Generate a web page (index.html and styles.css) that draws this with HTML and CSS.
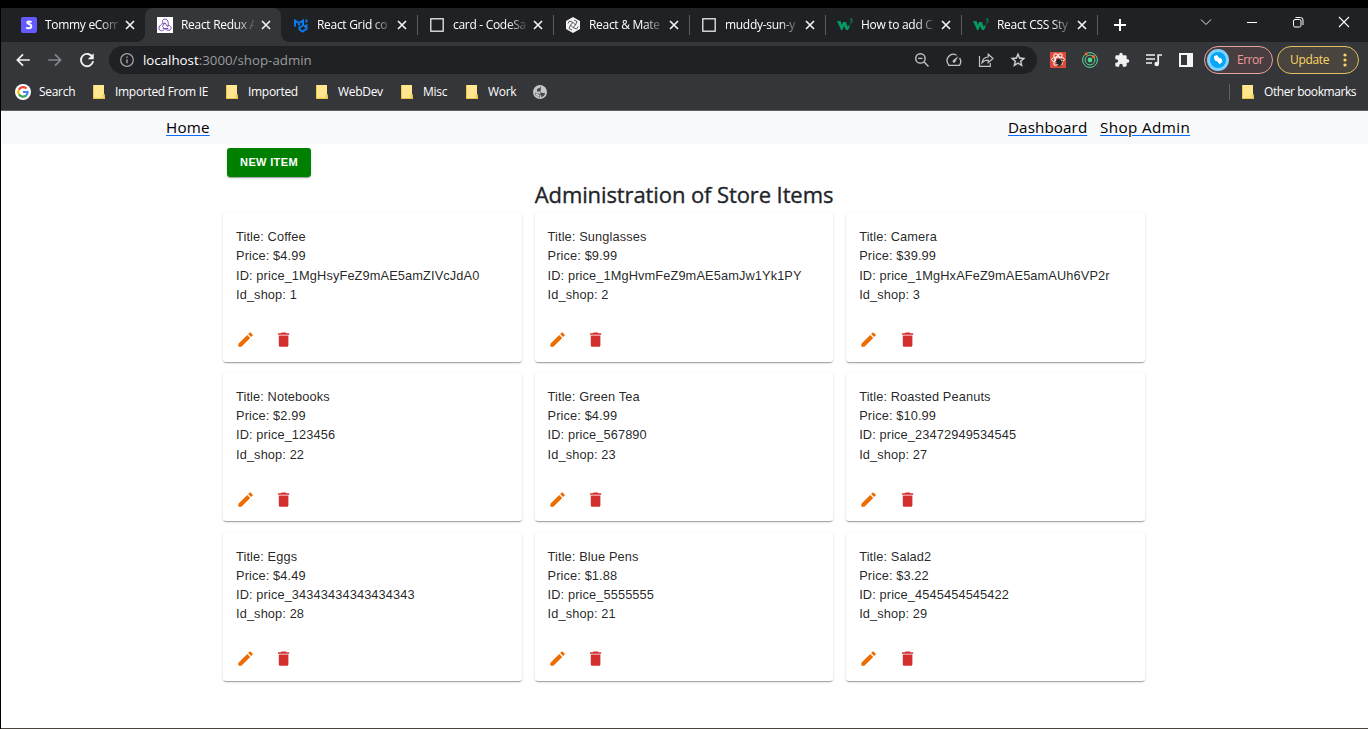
FILE: index.html
```html
<!DOCTYPE html>
<html lang="en">
<head>
<meta charset="utf-8">
<title>React Redux App</title>
<link rel="stylesheet" href="styles.css">
</head>
<body>
<svg class="defs" aria-hidden="true">
  <symbol id="close" viewBox="0 0 16 16"><path d="M4 4l8 8M12 4l-8 8" stroke="#f1f1f1" stroke-width="1.7" fill="none"/></symbol>
  <symbol id="mui" viewBox="0 0 16 16"><path d="M2 9.500V3.500L6 6l4-2.500V8.500L6.500 10.500v2l3 2 4-2.500V8.500l-2.500 1M6 5.500v3M13.500 2.500v3" stroke="#0a7cf0" stroke-width="2" fill="none"/></symbol>
  <symbol id="box" viewBox="0 0 16 16"><rect x="1.800" y="1.800" width="12.400" height="12.400" stroke="#eee" stroke-width="1.300" fill="none"/></symbol>
  <symbol id="w3" viewBox="0 0 16 16"><path d="M0 4h3.500l1.500 4 1-3h3l1.800 5L12.600 7v3.500L10.800 13H9L7 9l-1.600 4H4z" fill="#059862"/><path d="M13 2h2.300L14 3.500q1.600.2 1.200 1.500-.6 1.200-2.200.7" stroke="#059862" stroke-width=".9" fill="none"/></symbol>
  <symbol id="folder" viewBox="0 0 12 14"><path d="M0 0h11v9l1 1v4H0z" fill="#ffe68f"/><path d="M0 13.500h11.500V10H10v3M.4 0v13" stroke="#e8bd3b" stroke-width=".9" fill="none"/></symbol>
  <symbol id="edit" viewBox="0 0 24 24"><path d="M3 17.250V21h3.750L17.810 9.940l-3.750-3.750L3 17.250zM20.710 7.040c.39-.39.39-1.020 0-1.410l-2.340-2.340a.996.996 0 0 0-1.410 0l-1.830 1.830 3.750 3.750 1.830-1.830z" fill="#ed6c02"/></symbol>
  <symbol id="delete" viewBox="0 0 24 24"><path d="M6 19c0 1.100.9 2 2 2h8c1.100 0 2-.9 2-2V7H6v12zM19 4h-3.500l-1-1h-5l-1 1H5v2h14V4z" fill="#d32f2f"/></symbol>
</svg>
<div class="window">
  <div class="tabstrip">
    <div class="tabs">
      <div class="tab"><svg class="fav" viewBox="0 0 16 16"><rect width="16" height="16" rx="2" fill="#635bff"/><path d="M10.600 5.200Q9.300 4.500 8 4.500q-1.700 0-1.700 1.100c0 1.900 4 1 4 3.600q0 2-2.600 2-1.500 0-2.600-.7" stroke="#fff" stroke-width="2" fill="none"/></svg><span class="tab-title">Tommy eCom</span><svg class="x"><use href="#close"/></svg></div>
      <div class="tab active"><svg class="fav" viewBox="0 0 16 16"><rect width="16" height="16" fill="#fff"/><g fill="none" stroke="#764abc" stroke-width="1"><path d="M10.600 10.200C12 7.500 11.500 2 8 2 5.300 2 4.800 5 6.200 6.300"/><path d="M8.200 6C5 6 1.200 9.500 2 12c1 2.500 4 2 5.500.2"/><path d="M5.600 9.400C7.500 12.500 12 14.500 13.700 12.500 15.200 10.500 13 8 10.800 8.400"/><path d="M5.800 11.500h5.500M8.200 6l2 3.500M5.500 9.500L7.500 6"/></g></svg><span class="tab-title">React Redux A</span><svg class="x"><use href="#close"/></svg></div>
      <div class="tab"><svg class="fav"><use href="#mui"/></svg><span class="tab-title">React Grid co</span><svg class="x"><use href="#close"/></svg></div>
      <div class="tab sep"><svg class="fav"><use href="#box"/></svg><span class="tab-title">card - CodeSa</span><svg class="x"><use href="#close"/></svg></div>
      <div class="tab sep"><svg class="fav" viewBox="0 0 16 16"><path d="M8 0l7 4v8l-7 4-7-4V4z" fill="#f4f4f4"/><g stroke="#303135" fill="none" stroke-width=".8"><path d="M8 5.500L10.500 8 8 10.500 5.500 8zM8 5.500L4.500 4M10.500 8L12 4.500M8 10.500l3.500 1.500M5.500 8L4 11.500M4.500 4L3 6.500M12 4.500L9 3M11.500 12l1.700-2.500M4 11.500L7 13"/></g></svg><span class="tab-title">React &amp; Mate</span><svg class="x"><use href="#close"/></svg></div>
      <div class="tab sep"><svg class="fav"><use href="#box"/></svg><span class="tab-title">muddy-sun-y</span><svg class="x"><use href="#close"/></svg></div>
      <div class="tab sep"><svg class="fav"><use href="#w3"/></svg><span class="tab-title">How to add C</span><svg class="x"><use href="#close"/></svg></div>
      <div class="tab sep"><svg class="fav"><use href="#w3"/></svg><span class="tab-title">React CSS Sty</span><svg class="x"><use href="#close"/></svg></div>
      <div class="newtab sep"><svg width="16" height="16" viewBox="0 0 16 16"><path d="M8 2v12M2 8h12" stroke="#fff" stroke-width="2"/></svg></div>
    </div>
    <div class="controls">
      <svg viewBox="0 0 16 16"><path d="M3 5.500l5 5 5-5" stroke="#e8e8e8" fill="none"/></svg>
      <svg viewBox="0 0 16 16"><path d="M3 8.500h10" stroke="#fff" fill="none"/></svg>
      <svg viewBox="0 0 16 16"><rect x="3.500" y="5.500" width="7.500" height="7.500" rx="1.500" stroke="#fff" fill="none"/><path d="M5.500 3.500h5q2.500 0 2.500 2.500v5" stroke="#fff" fill="none"/></svg>
      <svg viewBox="0 0 16 16"><path d="M3 3l10 10M13 3L3 13" stroke="#fff" stroke-width="1.100" fill="none"/></svg>
    </div>
  </div>
  <div class="toolbar">
    <div class="cells nav-icons">
      <svg viewBox="0 0 24 24"><path d="M21 12H5M12 4.500L4.500 12l7.500 7.500" stroke="#f1f1f1" stroke-width="2.300" fill="none"/></svg>
      <svg viewBox="0 0 24 24"><path d="M3 12h16M12 4.500l7.500 7.500-7.500 7.500" stroke="#85868a" stroke-width="2.300" fill="none"/></svg>
      <svg viewBox="0 0 24 24"><path d="M19.500 8.500A8.200 8.200 0 1 0 20.200 13.500" stroke="#f1f1f1" stroke-width="2.500" fill="none"/><path d="M21 3v8h-8z" fill="#f1f1f1"/></svg>
    </div>
    <div class="omnibox">
      <svg class="info" viewBox="0 0 16 16"><circle cx="8" cy="8" r="6.300" stroke="#a0a2a5" stroke-width="1.300" fill="none"/><path d="M8 7.200v4M8 4.500v1.400" stroke="#a0a2a5" stroke-width="1.400"/></svg>
      <span class="url"><b>localhost</b>:3000/shop-admin</span>
      <div class="cells omni-icons">
        <svg viewBox="0 0 16 16"><g stroke="#c2c3c5" stroke-width="1.400" fill="none"><circle cx="6.400" cy="6.400" r="4.700"/><path d="M9.800 9.800l4.700 4.700M4.200 6.400h4.400"/></g></svg>
        <svg viewBox="0 0 16 16"><g stroke="#c2c3c5" stroke-width="1.300" fill="none"><path d="M10.500 3.200A6.200 6.200 0 0 0 2.200 12l.6 1.300h10.600A6.200 6.200 0 0 0 13.500 6"/></g><path d="M12.500 4L7 8.200a1.400 1.400 0 1 0 2 2z" fill="#c2c3c5"/></svg>
        <svg viewBox="0 0 16 16"><g stroke="#c2c3c5" stroke-width="1.200" fill="none"><path d="M1.500 4v10.400h10.800V11"/><path d="M4 10.800C4.500 7 7 5.300 10.200 5V2.200L15 6.500l-4.800 4.200V8.200C7.500 8.200 5.500 9 4 10.800z"/></g></svg>
        <svg viewBox="1 1 22 22"><path d="M22 9.240l-7.190-.62L12 2 9.190 8.630 2 9.240l5.460 4.730L5.820 21 12 17.270 18.180 21l-1.630-7.030L22 9.240zM12 15.400l-3.760 2.270 1-4.280-3.320-2.880 4.380-.38L12 6.100l1.710 4.040 4.380.38-3.320 2.880 1 4.280L12 15.400z" fill="#d6d7d9" stroke="#d6d7d9" stroke-width=".4"/></svg>
      </div>
    </div>
    <div class="cells ext-icons">
      <svg viewBox="0 0 16 16"><rect width="16" height="16" fill="#dc4b39"/><g stroke="#fff" fill="none" stroke-width="1"><ellipse cx="8" cy="7.500" rx="6.500" ry="2.500"/><ellipse cx="8" cy="7.500" rx="6.500" ry="2.500" transform="rotate(60 8 7.500)"/><ellipse cx="8" cy="7.500" rx="6.500" ry="2.500" transform="rotate(120 8 7.500)"/></g><ellipse cx="9" cy="10" rx="2.600" ry="3.200" fill="#222" transform="rotate(-35 9 10)"/><path d="M5.500 9.500l6-2M6 12l7-3M7.500 14l4.500-1M10.500 6l1.500 1.500" stroke="#222" stroke-width=".9"/></svg>
      <svg viewBox="0 0 16 16"><g fill="none" stroke="#5ddb9a" stroke-width="1"><circle cx="8" cy="8" r="7.400"/><circle cx="8" cy="8" r="4.900"/></g><circle cx="8" cy="8" r="2.400" fill="#4bd68e"/><circle cx="4.200" cy="2" r="1.400" fill="#ff642e"/><circle cx="11.500" cy="4.600" r="1.600" fill="#ff642e"/></svg>
      <svg viewBox="0 0 24 24"><path d="M20.500 11H19V7c0-1.100-.9-2-2-2h-4V3.500a2.500 2.500 0 0 0-5 0V5H4c-1.100 0-2 .9-2 2v3.800h1.500a2.700 2.700 0 0 1 0 5.400H2V20c0 1.100.9 2 2 2h3.800v-1.500a2.700 2.700 0 0 1 5.400 0V22H17c1.100 0 2-.9 2-2v-4h1.500a2.500 2.500 0 0 0 0-5z" fill="#f1f1f1"/></svg>
      <svg viewBox="0 0 16 16"><path d="M0 3h9M0 7h9M0 11h6" stroke="#f1f1f1" stroke-width="1.600"/><path d="M12.200 12V3H16" stroke="#f1f1f1" stroke-width="1.700" fill="none"/><circle cx="10.700" cy="12" r="2.300" fill="#f1f1f1"/></svg>
      <svg viewBox="0 0 16 16"><path d="M1 1h14v14H1zM3 3v10h6V3z" fill="#f5f5f5" fill-rule="evenodd"/></svg>
    </div>
    <div class="pill error"><svg width="22" height="22" viewBox="0 0 22 22"><circle cx="11" cy="11" r="11" fill="#7fd2ff"/><circle cx="11" cy="11" r="8" fill="#08a6f5"/><path d="M7.500 7.500l2.500-1 1.500 2.500 3 1.200.3 2.800-2.300 1.700-2-2.700-2.500-1z" fill="#fff" stroke="#fff" stroke-linejoin="round"/></svg><span>Error</span></div>
    <div class="pill update"><span>Update</span><svg width="4" height="14" viewBox="0 0 4 14"><circle cx="2" cy="2" r="1.600" fill="#fdd663"/><circle cx="2" cy="7" r="1.600" fill="#fdd663"/><circle cx="2" cy="12" r="1.600" fill="#fdd663"/></svg></div>
  </div>
  <div class="bookmarks">
    <div class="bm"><svg class="google" width="16" height="16" viewBox="0 0 16 16"><circle cx="8" cy="8" r="8" fill="#fff"/><g fill="none" stroke-width="2.200"><path d="M11.500 4.600A4.700 4.700 0 0 0 4 5.600" stroke="#ea4335"/><path d="M4 5.600a4.700 4.700 0 0 0 0 4.800" stroke="#fbbc05"/><path d="M4 10.400a4.700 4.700 0 0 0 7 1.200" stroke="#34a853"/><path d="M11 11.600A4.500 4.500 0 0 0 12.600 8H8" stroke="#4285f4"/></g></svg>Search</div>
    <div class="bm"><svg class="folder"><use href="#folder"/></svg>Imported From IE</div>
    <div class="bm"><svg class="folder"><use href="#folder"/></svg>Imported</div>
    <div class="bm"><svg class="folder"><use href="#folder"/></svg>WebDev</div>
    <div class="bm"><svg class="folder"><use href="#folder"/></svg>Misc</div>
    <div class="bm"><svg class="folder"><use href="#folder"/></svg>Work</div>
    <div class="bm"><svg width="16" height="16" viewBox="0 0 16 16"><circle cx="8" cy="8" r="7" fill="#c4c6c9"/><path d="M9 2.500L7.500 4 5 5v2.500h3L10 9h3l-.5 2-3 2.500-.5-2.500-2-1.500-4-1v2L6 13l2 .5" fill="#46474b"/><path d="M3 9l3 .5 1.500 1.500v2L5 12.500z" fill="#c4c6c9"/></svg></div>
    <div class="bm other"><svg class="folder"><use href="#folder"/></svg>Other bookmarks</div>
  </div>
  <main class="page">
    <nav class="navbar"><a class="home">Home</a><a class="dash">Dashboard</a><a class="shop">Shop Admin</a></nav>
    <div class="content">
      <button class="new-item">NEW ITEM</button>
      <h3><span>Administration of Store Items</span></h3>
      <div class="grid">
        <article class="card"><p>Title: Coffee</p><p>Price: $4.99</p><p>ID: price_1MgHsyFeZ9mAE5amZIVcJdA0</p><p>Id_shop: 1</p><div class="actions"><svg><use href="#edit"/></svg><svg><use href="#delete"/></svg></div></article>
        <article class="card"><p>Title: Sunglasses</p><p>Price: $9.99</p><p>ID: price_1MgHvmFeZ9mAE5amJw1Yk1PY</p><p>Id_shop: 2</p><div class="actions"><svg><use href="#edit"/></svg><svg><use href="#delete"/></svg></div></article>
        <article class="card"><p>Title: Camera</p><p>Price: $39.99</p><p>ID: price_1MgHxAFeZ9mAE5amAUh6VP2r</p><p>Id_shop: 3</p><div class="actions"><svg><use href="#edit"/></svg><svg><use href="#delete"/></svg></div></article>
        <article class="card"><p>Title: Notebooks</p><p>Price: $2.99</p><p>ID: price_123456</p><p>Id_shop: 22</p><div class="actions"><svg><use href="#edit"/></svg><svg><use href="#delete"/></svg></div></article>
        <article class="card"><p>Title: Green Tea</p><p>Price: $4.99</p><p>ID: price_567890</p><p>Id_shop: 23</p><div class="actions"><svg><use href="#edit"/></svg><svg><use href="#delete"/></svg></div></article>
        <article class="card"><p>Title: Roasted Peanuts</p><p>Price: $10.99</p><p>ID: price_23472949534545</p><p>Id_shop: 27</p><div class="actions"><svg><use href="#edit"/></svg><svg><use href="#delete"/></svg></div></article>
        <article class="card"><p>Title: Eggs</p><p>Price: $4.49</p><p>ID: price_34343434343434343</p><p>Id_shop: 28</p><div class="actions"><svg><use href="#edit"/></svg><svg><use href="#delete"/></svg></div></article>
        <article class="card"><p>Title: Blue Pens</p><p>Price: $1.88</p><p>ID: price_5555555</p><p>Id_shop: 21</p><div class="actions"><svg><use href="#edit"/></svg><svg><use href="#delete"/></svg></div></article>
        <article class="card"><p>Title: Salad2</p><p>Price: $3.22</p><p>ID: price_4545454545422</p><p>Id_shop: 29</p><div class="actions"><svg><use href="#edit"/></svg><svg><use href="#delete"/></svg></div></article>
      </div>
    </div>
  </main>
</div>
</body>
</html>
```
FILE: styles.css
```css
* { box-sizing: border-box; }
body { margin: 0; background: #fff; overflow: hidden; }
svg { display: block; flex: none; }
.defs { width: 0; height: 0; position: absolute; }
.window {
  width: 1368px; height: 729px; border: solid #000; border-width: 8px 0 0 1px;
  display: flex; flex-direction: column;
  font: 12px/16px "Open Sans", "Noto Sans", sans-serif; color: #fff;
}
.tabstrip { height: 34px; background: #202124; display: flex; justify-content: space-between; }
.tabs { display: flex; padding-left: 8px; }
.tab { width: 136px; height: 34px; padding-left: 12px; display: flex; align-items: center; }
.tab.active { background: #35363a; border-radius: 8px 8px 0 0; position: relative; }
.tab.active::before, .tab.active::after { content: ""; position: absolute; bottom: 0; width: 8px; height: 8px; }
.tab.active::before { left: -8px; background: radial-gradient(circle at 0 0, transparent 7.500px, #35363a 8px); }
.tab.active::after { right: -8px; background: radial-gradient(circle at 100% 0, transparent 7.500px, #35363a 8px); }
.sep { background: linear-gradient(#5b5c60, #5b5c60) 0 7px / 1px 20px no-repeat; }
.fav { width: 16px; height: 16px; }
.tab-title {
  width: 73px; margin-left: 8px; white-space: nowrap; letter-spacing: -.3px;
  -webkit-mask-image: linear-gradient(90deg, #000 75%, rgba(0,0,0,.15) 100%);
  mask-image: linear-gradient(90deg, #000 75%, rgba(0,0,0,.15) 100%);
}
.x { width: 16px; height: 16px; margin-left: 4px; }
.newtab { width: 45px; display: flex; align-items: center; justify-content: center; }
.controls { display: flex; padding: 6px 16px 0 0; gap: 30px; }
.controls svg { width: 16px; height: 16px; }

.toolbar { height: 36px; background: #35363a; display: flex; align-items: center; }
.cells { display: flex; }
.cells svg { width: 16px; height: 16px; margin: 0 8px; }
.nav-icons { padding-left: 6px; width: 108px; }
.nav-icons svg { width: 18px; height: 18px; margin: 0 7px; }
.omnibox { width: 928px; height: 28px; border-radius: 14px; background: #202124; display: flex; align-items: center; padding: 0 3px 0 10px; }
.info { width: 16px; height: 16px; }
.url { margin-left: 8px; flex: 1; font-size: 13.300px; color: #9a9b9e; letter-spacing: 0; }
.url b { font-weight: 400; color: #fff; }
.ext-icons { padding-left: 5px; width: 167px; }
.pill { height: 28px; border-radius: 14px; border: 1px solid; display: flex; align-items: center; letter-spacing: -.3px; }
.error { width: 69px; border-color: #e9a29b; background: #483e42; color: #f09c94; padding-left: 2px; gap: 8px; letter-spacing: -.5px; }
.update { width: 82px; margin-left: 4px; border-color: #e3c05b; background: #49453e; color: #fdd663; padding-left: 12px; justify-content: space-between; padding-right: 11px; }
.update span { letter-spacing: -.35px; }

.bookmarks {
  height: 33px; background: #35363a; border-bottom: 1px solid #626266; padding: 0 0 4px 14px; font-size: 12px;
  display: grid; grid-template-columns: 78px 133px 90px 85px 65px 66px 1fr auto; letter-spacing: -.3px;
}
.bm { display: flex; align-items: center; white-space: nowrap; }
.google { margin-right: 8px; }
.folder { width: 12px; height: 14px; margin-right: 10px; }
.other { width: 139px; padding-left: 13px; background: linear-gradient(#606166, #606166) 0 6px / 1px 16px no-repeat; letter-spacing: -.43px; }

.page { flex: 1; background: #fff; color: #212529; border-bottom: 1px solid #4a443e; }
.navbar { height: 33px; background: #f8f9fa; display: flex; padding: 4px 0 0 165px; font-size: 15.200px; line-height: 24px; letter-spacing: .2px; }
.navbar a { text-decoration: underline #0d6efd 1px; text-underline-offset: 2px; color: #000; white-space: nowrap; }
.home { width: 842px; }
.dash { width: 92px; letter-spacing: .1px; }
.shop { letter-spacing: .4px; }
.content { width: 922px; margin-left: 222px; padding-top: 4px; }
.new-item {
  display: block; width: 84px; height: 29px; margin: 0 0 0 4px; padding: 0 0 1px; border: 0; border-radius: 3px;
  background: green; color: #fff; font: 700 11px/27px "Liberation Sans", Arial, sans-serif; letter-spacing: .35px;
  box-shadow: 0 2px 1px -1px rgba(0,0,0,.3), 0 1px 3px rgba(0,0,0,.15);
}
h3 { margin: 3px 0 0; height: 33px; font-size: 22px; line-height: 28px; font-weight: 400; letter-spacing: -.1px; -webkit-text-stroke: .35px #212529; text-align: center; white-space: nowrap; }
.grid { display: grid; grid-template-columns: repeat(3, 1fr); column-gap: 12.800px; grid-auto-rows: 148.600px; row-gap: 11.200px; }
.card {
  border-radius: 3px; padding: 14.200px 12.800px 0 13px; font: 12.800px/19.200px "Liberation Sans", Arial, sans-serif;
  letter-spacing: .11px; color: rgba(0,0,0,.87);
  box-shadow: 0 2px 1px -1px rgba(0,0,0,.2), 0 1px 1px rgba(0,0,0,.14), 0 1px 3px rgba(0,0,0,.12);
}
.card p { margin: 0; white-space: nowrap; }
.actions { display: flex; gap: 19.200px; margin-top: 25.800px; }
.actions svg { width: 19.200px; height: 19.200px; }
```
